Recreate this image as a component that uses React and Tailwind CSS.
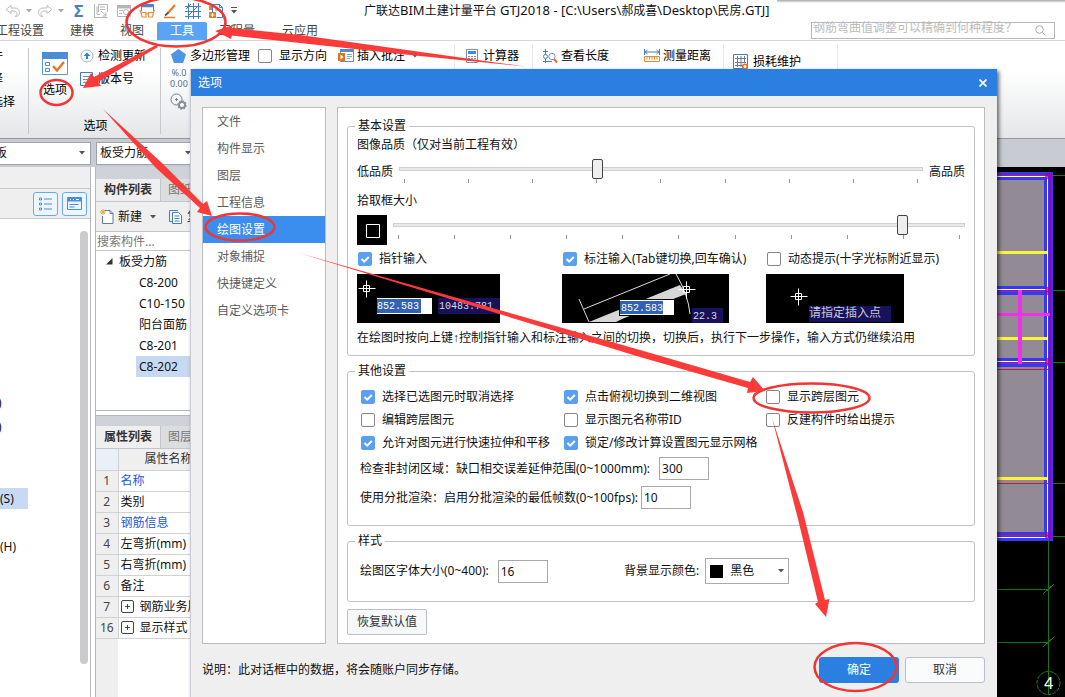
import React from "react";

const Caret = ({ className = "" }) => (
  <svg width="6" height="4" viewBox="0 0 6 4" className={"shrink-0 " + className} aria-hidden="true">
    <path d="M0 0h6L3 3.5z" fill="#555" />
  </svg>
);

const UndoIcon = ({ flip }) => (
  <svg width="16" height="14" viewBox="0 0 16 14" className="shrink-0" fill="none" stroke="#bdbdbd" strokeWidth="1">
    <path
      transform={flip ? "matrix(-1 0 0 1 16 0)" : undefined}
      d="M1 5.5 6 1.5v2.5h3.5c3.5 0 5 2 5 4.5S13 12.5 10 12.5c1.500-.8 2-1.800 2-3s-1-2.500-3-2.500H6v2.500z"
    />
  </svg>
);

const SheetIcon = () => (
  <svg width="16" height="16" viewBox="0 0 16 16" className="shrink-0" fill="none" stroke="#b5b5b5">
    <path d="M5.500 9V1.500h9V9M1.500 1v13.500h13M4 3.500v8h3M7 4h5M7 6.500h5M8 8l5 4.500M13 9.500V13H9.500" />
  </svg>
);
const FindSheetIcon = () => (
  <svg width="16" height="16" viewBox="0 0 16 16" className="shrink-0" fill="none" stroke="#b5b5b5">
    <path d="M1.500 2.500h13v11h-13z" />
    <path d="M1 4h14" strokeWidth="3" />
    <path d="M3 7.500h4M3 10.500h3" />
    <circle cx="10" cy="9" r="2.500" />
    <path d="m12 11 2 2" />
  </svg>
);
const GlassesIcon = () => (
  <svg width="16" height="16" viewBox="0 0 16 16" className="shrink-0" fill="none">
    <path d="M2.500 8V1.500h12V8" stroke="#4a86c8" />
    <path d="M2 3h13" stroke="#4a86c8" strokeWidth="2.500" />
    <path d="M2 9.500h5v4.500H3zM9.500 9.500h5l-1 4.500h-4zM7 11h2.500M2 9.500 1 7M14.500 9.500l1-2.500" stroke="#ee8b43" strokeWidth="1.200" />
  </svg>
);
const BrushIcon = () => (
  <svg width="16" height="16" viewBox="0 0 16 16" className="shrink-0" fill="none">
    <path d="M6 10 13 2" stroke="#ee7b23" strokeWidth="2.300" />
    <path d="M3 12.500 6.500 9.500" stroke="#555" strokeWidth="1.800" />
    <path d="M2 14.500h11" stroke="#ee7b23" strokeWidth="1.500" />
  </svg>
);
const GridIcon = () => (
  <svg width="16" height="16" viewBox="0 0 16 16" className="shrink-0" fill="none" stroke="#3f7fca">
    <path d="M0 3.500h16M0 8.500h16M0 13.500h16M3.500 0v16M8.500 0v16M13.500 0v16M1 6 6 1M2 14 14 2" />
  </svg>
);
const ExportIcon = () => (
  <svg width="16" height="16" viewBox="0 0 16 16" className="shrink-0" fill="none">
    <path d="M4.500 9V1.500h7l3 3v10h-6" stroke="#3f7fca" />
    <path d="M11.500 1.500v3h3" stroke="#3f7fca" />
    <path d="M1 9h7v6H1zM1 3h3v4H1z" fill="#ee7b23" />
    <path d="M4.500 10v4M2.500 12h4" stroke="#fff" />
    <path d="M7 7h5" stroke="#3f7fca" />
  </svg>
);

const PanelOptionsIcon = () => (
  <svg width="26" height="24" viewBox="0 0 26 24" fill="none">
    <path d="M.5.5h25v22H.5z" fill="#fff" stroke="#5b9bd5" />
    <path d="M0 0h26v7H0z" fill="#4a8fd6" />
    <path d="M3.500 10.500h4v3h-4zM3.500 16.500h4v3h-4z" stroke="#4a8fd6" />
    <path d="m11 14 4 4.500L22 10" stroke="#e8711c" strokeWidth="2.300" />
  </svg>
);
const UpdateIcon = () => (
  <svg width="14" height="14" viewBox="0 0 14 14" className="shrink-0" fill="none">
    <circle cx="7" cy="7" r="6" stroke="#9fb9d6" />
    <path d="M7 3.500 10.500 7H8v3H6V7H3.500z" fill="#2f7fd6" />
  </svg>
);
const VersionIcon = () => (
  <svg width="14" height="14" viewBox="0 0 14 14" className="shrink-0" fill="none" stroke="#3f7fca">
    <path d="M12.500 4V.500H.500v13h12V11" />
    <path d="M3 4.500h8M3 7.500h8M3 10.500h6" stroke="#7a8aa0" />
  </svg>
);
const Pentagon = () => (
  <svg width="15" height="14" viewBox="0 0 15 14" className="shrink-0">
    <path d="M7.500 0 15 5.300 12.200 14H2.800L0 5.300z" fill="#4f95e6" />
  </svg>
);
const GearIcon = () => (
  <svg width="17" height="17" viewBox="0 0 17 17" fill="none">
    <circle cx="6.500" cy="6.500" r="5.500" stroke="#6d7f95" />
    <path d="M5 6.500h3M6.500 5v3" stroke="#6d7f95" />
    <circle cx="12" cy="12" r="3" stroke="#8a8f96" strokeWidth="2" fill="#fff" />
    <circle cx="12" cy="12" r="4" stroke="#8a8f96" strokeDasharray="1.500 1.600" strokeWidth="1.500" />
  </svg>
);
const NoteIcon = () => (
  <svg width="16" height="14" viewBox="0 0 16 14" className="shrink-0" fill="none">
    <path d="M2.500.5h13v12h-13z" fill="#fff" stroke="#5b8fcf" />
    <path d="M2 0h14v3H2z" fill="#4a8fd6" />
    <path d="M9 5.500h5M9 7.500h5M9 9.500h3" stroke="#8aa" />
    <path d="M0 4h7v8H0z" fill="#e8711c" />
    <path d="M2.500 5.500v5l3-2.500z" fill="#fff" />
  </svg>
);
const CalculatorIcon = () => (
  <svg width="12" height="14" viewBox="0 0 12 14" className="shrink-0" fill="none">
    <path d="M.5.5h11v13H.500z" stroke="#7d8da1" fill="#fff" />
    <path d="M2 2h8v3H2z" fill="#3f8ae0" />
    <path d="M2 7.500h8M2 9.500h8M2 11.500h8" stroke="#7d8da1" strokeDasharray="2 1" />
  </svg>
);
const LengthIcon = () => (
  <svg width="16" height="16" viewBox="0 0 16 16" className="shrink-0" fill="none">
    <path d="M3.500 1v14M1 3.500h5M1 13.500h9" stroke="#3f7fca" />
    <circle cx="3.500" cy="8.500" r="2" stroke="#3f7fca" fill="#fff" />
    <circle cx="10" cy="8.500" r="3.200" stroke="#8a86d8" fill="#fff" />
    <path d="m12 11 3 3.500" stroke="#e8711c" strokeWidth="2.200" />
  </svg>
);
const RulerIcon = () => (
  <svg width="16" height="13" viewBox="0 0 16 13" className="shrink-0" fill="none">
    <path d="M.5 0v6M15.500 0v6M1 3h14M3.500 1 1 3l2.500 2M12.500 1 15 3l-2.500 2" stroke="#3f7fca" />
    <path d="M.5 7.500h15v5H.500z" stroke="#e8872f" />
    <path d="M3 8v2.500M5.500 8v2.500M8 8v2.500M10.500 8v2.500M13 8v2.500" stroke="#e8872f" />
  </svg>
);
const LossIcon = () => (
  <svg width="16" height="16" viewBox="0 0 16 16" className="shrink-0" fill="none">
    <path d="M.5.5h14v14H.500z" stroke="#3f7fca" />
    <path d="M2 4.500h11M2 8.500h11M2 11.500h7M4.500 2v11M8 2v11M11.500 2v7" stroke="#6b7c92" />
    <circle cx="12" cy="12.500" r="2.300" stroke="#e8711c" strokeWidth="1.600" fill="#fff" />
  </svg>
);

function Check({ label, checked }) {
  return (
    <label className="flex items-center gap-[7px] whitespace-nowrap">
      <span className="grid size-[14px] shrink-0">
        <input
          type="checkbox"
          defaultChecked={checked}
          className="peer col-start-1 row-start-1 size-[14px] appearance-none rounded-[2px] border border-[#858585] bg-white checked:border-[#5aa0f2] checked:bg-[#5aa0f2]"
        />
        <svg
          viewBox="0 0 14 14"
          className="pointer-events-none col-start-1 row-start-1 hidden size-[14px] peer-checked:block"
          fill="none"
          stroke="#fff"
          strokeWidth="2"
        >
          <path d="m3.500 7 2.700 2.700L10.800 5" />
        </svg>
      </span>
      {label}
    </label>
  );
}

function Slider({ label, count, value }) {
  return (
    <div className="min-w-0 flex-1">
      <input
        type="range"
        aria-label={label}
        min="0"
        max={count - 1}
        defaultValue={value}
        className="block h-5 w-full appearance-none bg-transparent [&::-webkit-slider-runnable-track]:h-1 [&::-webkit-slider-runnable-track]:border [&::-webkit-slider-runnable-track]:border-[#d0d0d0] [&::-webkit-slider-runnable-track]:bg-[#e7eaea] [&::-webkit-slider-thumb]:-mt-[9px] [&::-webkit-slider-thumb]:h-5 [&::-webkit-slider-thumb]:w-[11px] [&::-webkit-slider-thumb]:appearance-none [&::-webkit-slider-thumb]:rounded-[2px] [&::-webkit-slider-thumb]:border [&::-webkit-slider-thumb]:border-[#444] [&::-webkit-slider-thumb]:bg-[#eeeeee]"
      />
      <div className="flex justify-between px-[5px]">
        {Array.from({ length: count }, (_, i) => (
          <span key={i} className="h-1 w-px bg-[#999]" />
        ))}
      </div>
    </div>
  );
}

const Cross = ({ x, y }) => (
  <g stroke="#fff" fill="none">
    <path d={`M${x - 8} ${y}h17M${x} ${y - 8}v17`} />
    <path d={`M${x - 3} ${y - 3}h6v6h-6z`} />
  </g>
);

const mono = { fontFamily: '"Liberation Mono", monospace', fontSize: 10 };

const PointerPreview = () => (
  <svg width="143" height="49" viewBox="0 0 143 49" className="block bg-black">
    <Cross x={9.5} y={14.5} />
    <path d="M20 24h55v16H20z" fill="#fff" />
    <path d="M20 25h44v14H20z" fill="#2f62b8" />
    <text x="20" y="35" fill="#fff" style={mono}>852.583</text>
    <path d="M81 24h62v16H81z" fill="#17125a" />
    <text x="82" y="35" fill="#d8d8e8" style={mono}>10483.781</text>
  </svg>
);
const DimensionPreview = () => (
  <svg width="167" height="49" viewBox="0 0 167 49" className="block bg-black">
    <path d="M27 48 118 11l6 9L60 45l-6 3z" fill="#d6d6d6" />
    <path d="M17 25l10 23M22 35 108 0" stroke="#ddd" fill="none" />
    <path d="M114 0q12 20 14 40" stroke="#ddd" fill="none" />
    <Cross x={124.5} y={15.500} />
    <path d="M57 25h56v17H57z" fill="#000" />
    <path d="M58 26h54v15H58z" fill="#fff" />
    <path d="M58 27h43v13H58z" fill="#2f62b8" />
    <text x="59" y="37" fill="#fff" style={mono}>852.583</text>
    <path d="M130 34h31v15h-31z" fill="#17125a" />
    <text x="131" y="45" fill="#d8d8e8" style={mono}>22.3</text>
  </svg>
);
const HintPreview = () => (
  <svg width="138" height="49" viewBox="0 0 138 49" className="block bg-black">
    <Cross x={32.500} y={22.500} />
    <path d="M43 32h82v16H43z" fill="#17125a" />
    <text x="43" y="43" fill="#c8c8d4" style={{ fontFamily: '"Noto Sans CJK SC", sans-serif', fontSize: 12 }}>
      请指定插入点
    </text>
  </svg>
);

function Group({ title, children, className = "" }) {
  return (
    <fieldset className={"min-w-0 rounded-[3px] border border-[#c0c2c6] " + className}>
      <legend className="ml-[7px] px-[3px] leading-4">{title}</legend>
      {children}
    </fieldset>
  );
}

const navItems = ["文件", "构件显示", "图层", "工程信息", "绘图设置", "对象捕捉", "快捷键定义", "自定义选项卡"];

function NumberField({ label, value, gap }) {
  return (
    <label className={"flex items-center whitespace-nowrap " + gap}>
      {label}
      <input type="text" defaultValue={value} className="h-[23px] w-[50px] border border-[#a8a8a8] bg-white px-[2px] text-[12px]" />
    </label>
  );
}

function OptionsDialog() {
  return (
    <section
      role="dialog"
      aria-label="选项"
      className="absolute bottom-0 left-[190px] right-[68px] top-[69px] flex flex-col border-l border-[#c9ccd2] bg-[#efefef] shadow-[2px_2px_4px_rgba(0,0,0,0.6)]"
    >
      <header className="flex h-[27px] shrink-0 items-center justify-between bg-[#2b7fe1] pl-[7px] pr-[9px] text-white">
        <h2>选项</h2>
        <button aria-label="关闭" className="grid size-[10px] place-items-center">
          <svg width="8" height="8" viewBox="0 0 8 8" stroke="#fff" strokeWidth="1.700">
            <path d="m.5.500 7 7M7.500.500l-7 7" />
          </svg>
        </button>
      </header>

      <div className="flex h-[559px] shrink-0 gap-[11px] pb-[11px] pl-[11px] pr-3 pt-[11px]">
        <nav className="w-[124px] shrink-0 border border-[#b9bcc1] bg-white">
          {navItems.map((name) => (
            <a
              key={name}
              href="#"
              className={
                "block h-[27px] pl-[14px] leading-[27px] " +
                (name === "绘图设置" ? "bg-[#3b8eee] text-white" : "text-[#5c5c5c]")
              }
            >
              {name}
            </a>
          ))}
        </nav>

        <div className="flex min-w-0 flex-1 flex-col gap-[7px] border border-[#b9bcc1] bg-white px-[9px] pt-[10px]">
          <Group title="基本设置" className="h-[238px]">
            <div className="px-[9px]">
              <div className="h-[22px] leading-[22px]">图像品质（仅对当前工程有效）</div>
              <div className="flex h-[34px] items-start gap-[6px] pt-[3px] leading-[26px]">
                <span>低品质</span>
                <Slider label="图像品质" count={9} value={3} />
                <span>高品质</span>
              </div>
              <div className="h-[22px] leading-[22px]">拾取框大小</div>
              <div className="flex h-[37px] items-start gap-[6px] pt-[3px]">
                <svg width="30" height="30" viewBox="0 0 30 30" className="shrink-0 bg-black" fill="none" stroke="#fff">
                  <path d="M9.500 9.500h13v13h-13z" />
                </svg>
                <Slider label="拾取框大小" count={11} value={9} />
              </div>
              <div className="grid grid-cols-[205px_204px_1fr] gap-y-[5px]">
                <div className="flex h-5 items-center pl-px">
                  <Check label="指针输入" checked />
                </div>
                <div className="flex h-5 items-center pl-px">
                  <Check label="标注输入(Tab键切换,回车确认)" checked />
                </div>
                <div className="flex h-5 items-center pl-px">
                  <Check label="动态提示(十字光标附近显示)" />
                </div>
                <PointerPreview />
                <DimensionPreview />
                <HintPreview />
              </div>
              <p className="whitespace-nowrap pt-[5px] leading-5">
                在绘图时按向上键<span className='font-["Liberation_Serif",serif]'>↑</span>控制指针输入和标注输入之间的切换，切换后，执行下一步操作，输入方式仍继续沿用
              </p>
            </div>
          </Group>

          <Group title="其他设置" className="h-[163px]">
            <div className="grid auto-rows-[23px] grid-cols-[203px_202px_1fr] pl-[13px] pt-[6px]">
              <Check label="选择已选图元时取消选择" checked />
              <Check label="点击俯视切换到二维视图" checked />
              <Check label="显示跨层图元" />
              <Check label="编辑跨层图元" />
              <Check label="显示图元名称带ID" />
              <Check label="反建构件时给出提示" />
              <Check label="允许对图元进行快速拉伸和平移" checked />
              <Check label="锁定/修改计算设置图元显示网格" checked />
            </div>
            <div className="flex flex-col gap-[6px] pl-3 pt-[3px]">
              <NumberField label="检查非封闭区域：缺口相交误差延伸范围(0~1000mm):" value="300" gap="gap-[9px]" />
              <NumberField label="使用分批渲染：启用分批渲染的最低帧数(0~100fps):" value="10" gap="gap-[3px]" />
            </div>
          </Group>

          <Group title="样式" className="h-[69px]">
            <div className="flex items-center pl-3 pt-[9px]">
              <div className="w-[264px]">
                <NumberField label="绘图区字体大小(0~400):" value="16" gap="gap-[9px]" />
              </div>
              <label htmlFor="bg" className="pr-[6px]">背景显示颜色:</label>
              <div className="flex h-[26px] w-[84px] items-center gap-[7px] border border-[#a8a8a8] bg-white px-1">
                <span className="size-[13px] shrink-0 bg-black" />
                <select id="bg" defaultValue="黑色" className="min-w-0 flex-1 appearance-none bg-transparent">
                  <option>黑色</option>
                  <option>白色</option>
                </select>
                <Caret />
              </div>
            </div>
          </Group>

          <button className="h-[26px] w-20 shrink-0 rounded-[2px] border border-[#b9bfc9] bg-[#f7f8fa] text-[#333]">恢复默认值</button>
        </div>
      </div>

      <footer className="flex items-center gap-[6px] pl-[11px] pr-3 pt-[2px]">
        <p className="flex-1 whitespace-nowrap">说明：此对话框中的数据，将会随账户同步存储。</p>
        <button className="h-[26px] w-20 rounded-[3px] bg-[#2b7fe1] text-white">确定</button>
        <button className="h-[26px] w-20 rounded-[3px] border border-[#b9bfd3] bg-[#fafbfc] text-[#333]">取消</button>
      </footer>
    </section>
  );
}

const Latin = ({ children }) => <span className="text-[13px]">{children}</span>;

function Header() {
  return (
    <header>
      <div className="flex h-[21px] items-center">
        <div className="flex w-[364px] shrink-0 items-center">
          <div className="flex items-center gap-[5px] pl-[5px]">
            <UndoIcon />
            <Caret className="opacity-50" />
            <UndoIcon flip />
            <Caret className="opacity-50" />
          </div>
          <span className="w-7 pl-[10px] text-[16px] font-bold leading-5 text-[#4a7fc0]">Σ</span>
          <div className="flex items-center gap-[7px] pl-px">
            <SheetIcon />
            <FindSheetIcon />
            <GlassesIcon />
            <BrushIcon />
            <GridIcon />
            <ExportIcon />
            <svg width="6" height="7" viewBox="0 0 6 7">
              <path d="M0 .500h6" stroke="#555" />
              <path d="M0 3h6L3 6.500z" fill="#555" />
            </svg>
          </div>
        </div>
        <h1 className="whitespace-nowrap">
          广联达<Latin>BIM</Latin>土建计量平台<Latin>{" GTJ2018 - [C:\\Users\\"}</Latin>郝成喜<Latin>{"\\Desktop\\"}</Latin>民房<Latin>.GTJ]</Latin>
        </h1>
      </div>
      <div className="flex h-5 items-center justify-between border-b border-[#d3d6da] pr-[10px] text-[#444]">
        <nav className="-ml-1 flex items-center whitespace-nowrap">
          <a href="#" className="w-[74px]">工程设置</a>
          <a href="#" className="w-[50px]">建模</a>
          <a href="#" className="w-[37px]">视图</a>
          <a href="#" className="h-[18px] w-[50px] rounded-t-[2px] bg-[#5ba3f5] text-center leading-[18px] text-white">工具</a>
          <a href="#" className="w-[75px] pl-3">工程量</a>
          <a href="#">云应用</a>
        </nav>
        <div className="flex h-[17px] w-[244px] items-center border border-[#b8b8b8] bg-white pr-2">
          <input
            type="text"
            aria-label="搜索"
            placeholder="钢筋弯曲值调整可以精确到何种程度？"
            className="-mt-[5px] min-w-0 flex-1 px-px text-[12px] leading-4 placeholder:text-[#bcbcbc]"
          />
          <svg width="11" height="11" viewBox="0 0 11 11" fill="none" stroke="#aaa">
            <circle cx="4.500" cy="4.500" r="3.800" />
            <path d="m7.500 7.500 3 3" />
          </svg>
        </div>
      </div>
    </header>
  );
}

const toolBtn = "flex h-[23px] items-center whitespace-nowrap";

function Ribbon() {
  return (
    <div className="flex h-[98px] shrink-0 border-b border-[#94989d] bg-linear-to-b from-white from-30% to-[#e4e6e8] pt-[3px] text-black">
      <div className="my-1 flex w-[29px] shrink-0 flex-col overflow-hidden border-r border-[#c6c9cc]">
        <button className="-ml-[9px] -mt-1 h-[23px] w-3 text-left">件</button>
        <button className="-ml-[9px] h-[23px] w-3 text-left">择</button>
        <button className="-ml-[9px] h-[23px] w-6 whitespace-nowrap text-left">选择</button>
      </div>
      <div className="my-1 flex w-[132px] shrink-0 flex-col border-r border-[#c6c9cc]">
        <div className="-mt-1 flex h-[77px] gap-3">
          <button className="ml-[13px] flex w-[26px] flex-col items-center gap-[6px] whitespace-nowrap pt-2">
            <PanelOptionsIcon />
            选项
          </button>
          <div>
            <button className={toolBtn + " gap-1"}><UpdateIcon />检测更新</button>
            <button className={toolBtn + " gap-1"}><VersionIcon />版本号</button>
          </div>
        </div>
        <div className="pl-[2px] text-center leading-4">选项</div>
      </div>
      <div className="flex">
        <div className="w-[97px] pl-[9px]">
          <button className={toolBtn + " gap-1 pl-px"}><Pentagon />多边形管理</button>
          <button aria-label="小数位数" className="flex h-[23px] flex-col text-[9px] leading-[11px] text-[#5b6f88]">
            <span>%.0</span>
            <span>0.00</span>
          </button>
          <button aria-label="查看设置" className="flex h-[23px] items-center"><GearIcon /></button>
        </div>
        <div className="flex h-[23px] w-20 items-center"><Check label="显示方向" /></div>
        <button className={toolBtn + " w-[116px] gap-[3px]"}>
          <NoteIcon />插入批注<Caret className="ml-1" />
        </button>
        <div className="w-[78px] border-l border-[#e8eaec] pl-[11px]">
          <button className={toolBtn + " gap-[5px]"}><CalculatorIcon />计算器</button>
        </div>
        <div className="flex w-[191px] gap-[35px] border-l border-[#e8eaec] pl-[9px]">
          <button className={toolBtn + " gap-[3px]"}><LengthIcon />查看长度</button>
          <button className={toolBtn + " gap-[3px]"}><RulerIcon />测量距离</button>
        </div>
        <div className="w-[115px] border-x border-[#e8eaec] pl-[9px] pt-[6px]">
          <button className={toolBtn + " gap-[4px]"}><LossIcon />损耗维护</button>
        </div>
      </div>
    </div>
  );
}

const combo = "flex h-[23px] items-center justify-between border border-[#9fa3a8] bg-white pr-[5px]";

const props = [
  ["1", "名称", true],
  ["2", "类别"],
  ["3", "钢筋信息", true],
  ["4", "左弯折(mm)"],
  ["5", "右弯折(mm)"],
  ["6", "备注"],
  ["7", "钢筋业务属性", false, true],
  ["16", "显示样式", false, true],
];

const PanelTabs = ({ first, second }) => (
  <div className="flex h-[23px] shrink-0 border-b border-[#c2c5c9] bg-[#dcdddf] leading-[22px]">
    <button className="w-[65px] border-r border-[#c2c5c9] bg-[#efefef] font-bold text-[#333]">{first}</button>
    <button className="pl-[7px] text-[#777]">{second}</button>
  </div>
);

const toggle = "grid h-6 w-[25px] place-items-center rounded-[3px] border border-[#67aaf0] bg-[#edf5fe]";

function Workspace() {
  return (
    <div className="flex min-h-0 flex-1 overflow-hidden">
      <aside className="flex w-[91px] shrink-0 flex-col border-r border-[#b4b8bd]">
        <div className="h-[22px] shrink-0 border-b border-[#c6c9cc] bg-[#efefef]" />
        <div className="flex h-[30px] shrink-0 items-center justify-end gap-1 border-b border-[#c6c9cc] bg-[#efefef] pr-[3px]">
          <button aria-label="列表" className={toggle}>
            <svg width="13" height="14" viewBox="0 0 13 14" fill="none" stroke="#4a90e2">
              <path d="M.5 1h2v2h-2zM.5 6h2v2h-2zM.5 11h2v2h-2zM5 2h8M5 7h8M5 12h8" />
            </svg>
          </button>
          <button aria-label="窗口" className={toggle}>
            <svg width="15" height="13" viewBox="0 0 15 13" fill="none" stroke="#4a90e2">
              <path d="M.5.500h14v12H.500z" />
              <path d="M0 2.500h15" strokeWidth="4" />
              <path d="M2.500 7.500h9M2.500 10h5" />
              <path d="M3 2.500h1M6 2.500h1M9 2.500h3" stroke="#fff" />
            </svg>
          </button>
        </div>
        <div className="flex flex-1 pr-[2px]">
          <ul className="min-w-0 flex-1 overflow-hidden pt-[173px] leading-[21px]">
            <li className="-ml-[2px] mb-[3px] h-[21px]">)</li>
            <li className="-ml-[2px] mb-[51px] h-[21px]">)</li>
            <li className="mb-[27px] h-[21px] w-7 bg-[#c7daf2]">(S)</li>
            <li className="h-[21px]">(H)</li>
          </ul>
          <div className="mt-3 h-[433px] w-2 rounded-full bg-[#cbcbcb]" />
        </div>
      </aside>

      <aside className="ml-1 flex w-[160px] shrink-0 flex-col border-l border-[#b4b8bd]">
        <div className="h-3 shrink-0 bg-[#cfd3d9]" />
        <PanelTabs first="构件列表" second="图纸管理" />
        <div className="flex h-[29px] shrink-0 items-center gap-[13px] bg-[#efefef] pl-1">
          <button className="flex items-center gap-[4px]">
            <svg width="14" height="15" viewBox="0 0 14 15" fill="none">
              <path d="M5 1.500h5l3 3v10H2.500V7" stroke="#5d7fa8" fill="#fff" />
              <path d="M10 1.500v3h3" stroke="#5d7fa8" />
              <path d="M3 0v6M0 3h6M1 1l4 4M5 1 1 5" stroke="#eda436" />
            </svg>
            新建
            <Caret className="ml-1" />
          </button>
          <button className="flex items-center gap-[5px] whitespace-nowrap">
            <svg width="13" height="14" viewBox="0 0 13 14" fill="none" stroke="#3f7fca">
              <path d="M9 .500H.500v11H3" />
              <path d="M3.500 2.500h6l3 3v8h-9zM5.500 6h5M5.500 8.500h5M5.500 11h5" fill="#fff" />
            </svg>
            复制
          </button>
        </div>
        <input
          type="text"
          aria-label="搜索构件"
          placeholder="搜索构件..."
          className="h-5 shrink-0 border-y border-[#c2c5c9] bg-white px-px text-[12px] placeholder:text-[#777]"
        />
        <ul className="h-[160px] shrink-0 border-b border-[#b4b8bd] leading-[21px]">
          <li className="flex items-center gap-[6px] pl-[10px]">
            <svg width="7" height="7" viewBox="0 0 7 7"><path d="M6.500 0v6.500H0z" fill="#333" /></svg>
            板受力筋
          </li>
          {["C8-200", "C10-150", "阳台面筋", "C8-201", "C8-202"].map((n) => (
            <li key={n} className={"ml-10 pl-[3px] " + (n === "C8-202" ? "bg-[#c7d9f1]" : "")}>{n}</li>
          ))}
        </ul>
        <div className="mt-1 h-[11px] shrink-0 border-t border-[#b4b8bd] bg-[#cfd3d9]" />
        <PanelTabs first="属性列表" second="图层管理" />
        <div className="flex-1 bg-[linear-gradient(to_right,#efefef_22px,#fff_22px)]">
          <table className="w-full table-fixed border-collapse bg-white leading-5">
            <thead>
              <tr className="h-[21px] border-b border-[#d0d3d6] bg-[#efefef]">
                <th className="w-[22px] border-r border-[#d0d3d6] bg-[#eaf0f7]" />
                <th className="p-0 pl-[26px] text-left font-normal text-[#333]">属性名称</th>
              </tr>
            </thead>
            <tbody>
              {props.map(([n, name, blue, plus]) => (
                <tr key={n} className="h-[21px] border-b border-[#d0d3d6]">
                  <td className="border-r border-[#d0d3d6] bg-[#efefef] p-0 text-center text-[#444]">{n}</td>
                  <td className={"whitespace-nowrap p-0 pl-[2px] " + (blue ? "text-[#2457e0]" : "")}>
                    <span className="flex items-center gap-[6px]">
                      {plus && (
                        <svg width="13" height="13" viewBox="0 0 13 13" fill="none" stroke="#444">
                          <rect x=".5" y=".5" width="12" height="12" rx="1.500" />
                          <path d="M4 6.500h5M6.500 4v5" />
                        </svg>
                      )}
                      {name}
                    </span>
                  </td>
                </tr>
              ))}
            </tbody>
          </table>
        </div>
      </aside>

      <main className="flex min-w-0 flex-1 justify-end bg-black">
        <svg width="68" height="530" viewBox="0 0 68 530" className="shrink-0" shapeRendering="crispEdges">
          <path d="M0 8.500h68M0 123.500h68M0 195.500h68M0 316.500h68M0 369.500h68M0 422.500h52M0 475.500h52M51.500 369v135" stroke="#127a12" />
          <path d="M46 427l11-10M46 480l11-10" stroke="#127a12" />
          <path d="M0 5h56v369H0z" fill="#3838ee" />
          <path d="M0 13h47v106H0zM0 128h47v63H0zM0 200h47v165H0z" fill="#928b96" />
          <path d="M0 9.500h51M0 122.500h51M0 194.500h51M0 370.500h51M50.500 9v362" stroke="#fff" />
          <path d="M0 8.500h52M0 124h52M0 196h52M0 368.500h52" stroke="#c0186f" />
          <path d="M52.500 6v367" stroke="#9a00b0" strokeWidth="2" />
          <path d="M0 202.500h51M0 316.500h51" stroke="#b52040" />
          <path d="M0 85.500h50M0 171.500h50M0 311.500h50" stroke="#f8f53e" strokeWidth="3" />
          <path d="M0 147.500h53" stroke="#ee30e8" strokeWidth="3" />
          <path d="M22.500 123v74" stroke="#ee30e8" strokeWidth="4" />
          <path d="M48 120h7v8h-7zM48 191h7v8h-7zM48 6h7v6h-7zM48 365h7v6h-7z" fill="#a000a8" fillOpacity=".7" />
          <circle cx="51.500" cy="516" r="11.500" fill="none" stroke="#1a8a1a" shapeRendering="auto" strokeDasharray="4 1" />
          <path d="M51.500 503v25" stroke="#127a12" />
          <text x="47" y="522" fill="#fff" fontSize="17" fontFamily="Liberation Sans, sans-serif">4</text>
        </svg>
      </main>
    </div>
  );
}

const Annotations = () => (
  <svg className="pointer-events-none absolute left-0 top-0" width="1065" height="697" viewBox="0 0 1065 697" aria-hidden="true">
    <g fill="none" stroke="#f13434" strokeWidth="2.500">
      <ellipse cx="176" cy="22" rx="49.500" ry="24.500" />
      <ellipse cx="56.500" cy="92.500" rx="16" ry="12.500" />
      <ellipse cx="240" cy="227" rx="34.500" ry="13.500" />
      <ellipse cx="811.500" cy="398" rx="58" ry="14.500" />
      <ellipse cx="855.500" cy="667" rx="41" ry="24" />
    </g>
    <g fill="#fb3a3a">
      <path d="M215 31 233 25 232 28 300 35 525 66.500 400 54 300 43 232 35.500 231 39z" />
      <path d="M83 88 91 73 94 77 156 45 158 47 98 82 101 86z" />
      <path d="M103 109 162 163 203 204 207 201 212 216 197 212 200 208 156 168z" />
      <path d="M299 253 640 350 750 382 753 377 765 391 747 393 748 388 640 357z" />
      <path d="M772 418 803 512 825 600 829.500 599 826 617 815 604 818 602 798 519z" />
    </g>
  </svg>
);

export default function App() {
  return (
    <div className='relative flex h-screen min-h-[697px] w-full flex-col overflow-hidden bg-white font-["Noto_Sans","Noto_Sans_CJK_SC",sans-serif] text-[12px] leading-4 text-[#111]'>
      <Header />
      <Ribbon />
      <div className="flex h-7 shrink-0 items-center gap-[5px] bg-[#c8ccd2]">
        <button className={combo + " w-[91px] border-l-0"}>
          <span className="-ml-[5px]">板</span>
          <Caret />
        </button>
        <button className={combo + " w-[101px] pl-[3px]"}>
          板受力筋
          <Caret />
        </button>
      </div>
      <Workspace />
      <div className="absolute right-0 top-0 h-[3px] w-[288px] bg-linear-to-b from-[#a8a8a8] to-white" />
      <OptionsDialog />
      <Annotations />
    </div>
  );
}
